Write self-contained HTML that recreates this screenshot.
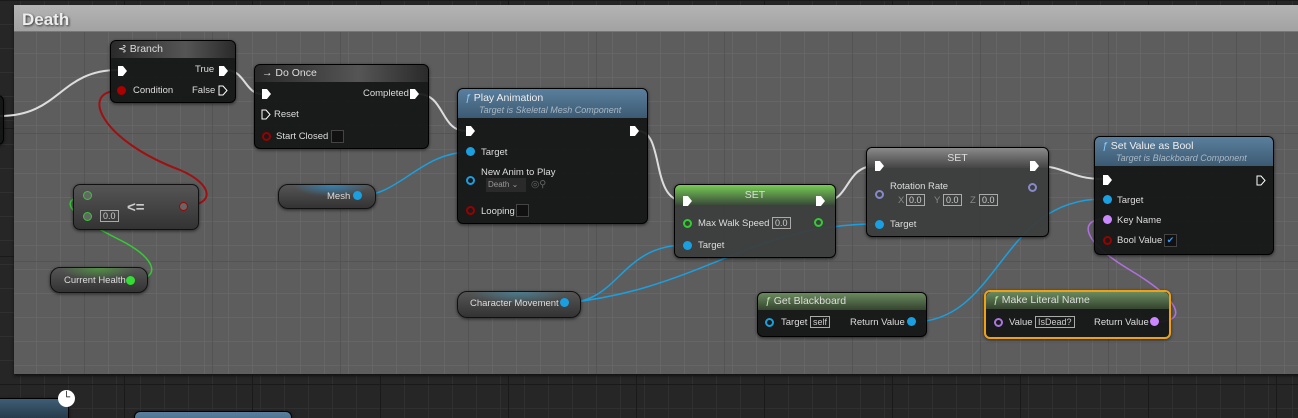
<!DOCTYPE html>
<html><head><meta charset="utf-8"><style>
*{margin:0;padding:0;box-sizing:border-box}
html,body{width:1298px;height:418px;overflow:hidden}
body{position:relative;font-family:"Liberation Sans",sans-serif;font-size:10px;color:#ddd;
background-color:#262626;background-image:linear-gradient(#1a1a1a 1px,transparent 1px),linear-gradient(90deg,#1a1a1a 1px,transparent 1px),linear-gradient(#303030 1px,transparent 1px),linear-gradient(90deg,#303030 1px,transparent 1px);background-size:128px 128px,128px 128px,24px 24px,24px 24px;background-position:-4px 0,-4px 0}
.cm{position:absolute;left:14px;top:5px;width:1300px;height:369px;background-color:#5d5d5d;background-image:linear-gradient(#545454 1px,transparent 1px),linear-gradient(90deg,#545454 1px,transparent 1px),linear-gradient(#666 1px,transparent 1px),linear-gradient(90deg,#666 1px,transparent 1px);background-size:128px 128px,128px 128px,24px 24px,24px 24px;background-position:70px 0,70px 0,-2px 0,-2px 0;box-shadow:0 2px 3px #111}
.cmh{position:absolute;left:0;top:0;right:0;height:27px;background:linear-gradient(180deg,#b4b4b4,#a2a2a2);border-bottom:1px solid #777;font-weight:bold;font-size:17px;color:#eee;padding:5px 8px;text-shadow:1px 1px 2px #333}
.n{position:absolute;background:rgba(20,22,22,.93);border:1px solid #000;border-radius:6px;box-shadow:0 1px 3px rgba(0,0,0,.6)}
.h{height:17px;border-radius:5px 5px 0 0;padding:2px 7px;font-size:10.5px;color:#ddd;background:linear-gradient(90deg,#2a2a2a,#555 60%,#2a2a2a)}
.hb{height:29px;background:linear-gradient(180deg,#5a7f9e,#3c5a72);padding:3px 7px}
.hb i{display:block;font-size:9px;color:#a9b8c4;font-style:italic;padding-left:14px;margin-top:1px}
.t{position:absolute;font-size:9.5px;color:#ddd;white-space:nowrap}
.ex{position:absolute;width:9px;height:10px;background:#fff;clip-path:polygon(0 0,55% 0,100% 50%,55% 100%,0 100%)}
.exo{position:absolute;width:10px;height:11px}
.p{position:absolute;width:9px;height:9px;border-radius:50%}
.box{position:absolute;border:1px solid #aaa;font-size:9px;padding:0 2px;color:#ccc;height:12px;line-height:10px}
.pill{position:absolute;border-radius:10px;border:1px solid #111;background:linear-gradient(180deg,#555,#333);box-shadow:0 1px 3px rgba(0,0,0,.6)}
</style></head><body>
<div class="cm"><div class="cmh">Death</div></div>
<svg width="1298" height="418" style="position:absolute;left:0;top:0" fill="none" stroke-width="2">
<path d="M0 116 C60 116 60 70 118 70" stroke="#ddd"/>
<path d="M226 70 C245 70 245 94 262 94" stroke="#ddd"/>
<path d="M418 94 C445 94 440 131 466 131" stroke="#ddd"/>
<path d="M638 131 C665 131 650 201 684 201" stroke="#ddd"/>
<path d="M825 201 C850 201 845 166 875 166" stroke="#ddd"/>
<path d="M1037 166 C1065 166 1070 179 1103 179" stroke="#ddd"/>
<path d="M118 91 C80 91 100 140 180 170 C215 185 215 206 183 206" stroke="#a01010"/>
<path d="M87 195 C50 200 80 220 120 240 C160 260 160 280 132 280" stroke="#3c3" stroke-width="1.5"/>
<path d="M358 196 C400 196 420 152 470 152" stroke="#1aa0e0" stroke-width="1.5"/>
<path d="M565 303 C620 303 620 245 686 245" stroke="#1aa0e0" stroke-width="1.5"/>
<path d="M565 303 C700 290 750 224 876 224" stroke="#1aa0e0" stroke-width="1.5"/>
<path d="M913 322 C1000 322 1000 199 1103 199" stroke="#1aa0e0" stroke-width="1.5"/>
<path d="M1155 322 C1190 322 1180 300 1130 270 C1080 240 1080 220 1103 219" stroke="#b070e0" stroke-width="1.5"/>
</svg>
<div class="n" style="left:-10px;top:95px;width:14px;height:50px"></div>
<div class="n" style="left:110px;top:40px;width:126px;height:63px"><div class="h">&#x22B0; Branch</div></div>
<div class="ex" style="left:118px;top:66px"></div><div class="t" style="left:195px;top:64px">True</div><div class="ex" style="left:219px;top:66px"></div>
<div class="p" style="left:117px;top:86px;background:#a00"></div><div class="t" style="left:133px;top:85px">Condition</div><div class="t" style="left:192px;top:85px">False</div>
<svg class="exo" style="left:218px;top:85px"><path d="M1 1H5L9 5.5L5 10H1Z" stroke="#fff" fill="none"/></svg>
<div class="n" style="left:254px;top:64px;width:175px;height:85px"><div class="h">&#x2192; Do Once</div></div>
<div class="ex" style="left:262px;top:89px"></div><div class="t" style="left:363px;top:88px">Completed</div><div class="ex" style="left:410px;top:89px"></div>
<svg class="exo" style="left:261px;top:109px"><path d="M1 1H5L9 5.5L5 10H1Z" stroke="#fff" fill="none"/></svg><div class="t" style="left:274px;top:109px">Reset</div>
<div class="p" style="left:262px;top:132px;border:2px solid #900"></div><div class="t" style="left:276px;top:131px">Start Closed</div><div style="position:absolute;left:331px;top:130px;width:13px;height:13px;background:#111;border:1px solid #444"></div>
<div class="n" style="left:457px;top:88px;width:191px;height:136px"><div class="h hb"><b style="font-weight:normal;color:#eee"><span style="color:#8cf;font-style:italic">&fnof;</span> Play Animation</b><i>Target is Skeletal Mesh Component</i></div></div>
<div class="ex" style="left:466px;top:126px"></div><div class="ex" style="left:630px;top:126px"></div>
<div class="p" style="left:466px;top:147px;background:#1aa0e0"></div><div class="t" style="left:481px;top:147px">Target</div>
<div class="t" style="left:481px;top:167px">New Anim to Play</div><div class="p" style="left:466px;top:176px;border:2px solid #1aa0e0"></div>
<div style="position:absolute;left:486px;top:178px;width:40px;height:14px;background:#2a2a2a;font-size:8px;color:#999;padding:2px 2px">Death &#x2304;</div>
<div class="t" style="left:531px;top:179px;color:#666">&#x25CE;&#x26B2;</div>
<div class="p" style="left:466px;top:206px;border:2px solid #900"></div><div class="t" style="left:481px;top:206px">Looping</div><div style="position:absolute;left:516px;top:204px;width:13px;height:13px;background:#111;border:1px solid #444"></div>
<div class="pill" style="left:73px;top:184px;width:126px;height:46px;border-radius:7px"></div>
<div class="p" style="left:83px;top:191px;border:1.5px solid #3c3;background:#666"></div>
<div class="p" style="left:83px;top:212px;border:1.5px solid #3c3;background:#666"></div>
<div class="box" style="left:100px;top:210px">0.0</div>
<div class="t" style="left:127px;top:199px;font-size:15px;font-weight:bold;color:#ccc">&lt;=</div>
<div class="p" style="left:179px;top:202px;border:1.5px solid #a00;background:#666"></div>
<div class="pill" style="left:50px;top:267px;width:98px;height:26px;background:radial-gradient(ellipse 40% 50% at 50% 0,rgba(80,170,60,.7),transparent),linear-gradient(#555,#333)"></div>
<div class="t" style="left:64px;top:275px">Current Health</div><div class="p" style="left:126px;top:276px;background:#3d3"></div>
<div class="pill" style="left:278px;top:184px;width:98px;height:25px;background:radial-gradient(ellipse 40% 50% at 55% 0,rgba(40,150,220,.7),transparent),linear-gradient(#555,#333)"></div>
<div class="t" style="left:327px;top:191px">Mesh</div><div class="p" style="left:353px;top:191px;background:#1aa0e0"></div>
<div class="n" style="left:674px;top:184px;width:162px;height:74px;background:rgba(60,62,62,.95)"><div class="h" style="background:linear-gradient(180deg,#7c5,#3a4a3a);text-align:center;height:20px;padding-top:4px">SET</div></div>
<div class="ex" style="left:683px;top:196px"></div><div class="ex" style="left:816px;top:196px"></div>
<div class="p" style="left:683px;top:219px;border:2px solid #3c3"></div><div class="t" style="left:698px;top:218px">Max Walk Speed</div><div class="box" style="left:772px;top:217px">0.0</div>
<div class="p" style="left:814px;top:218px;border:2px solid #3c3"></div>
<div class="p" style="left:683px;top:241px;background:#1aa0e0"></div><div class="t" style="left:698px;top:240px">Target</div>
<div class="n" style="left:866px;top:147px;width:183px;height:90px;background:rgba(60,62,62,.95)"><div class="h" style="background:linear-gradient(180deg,#8a8a8a,#444);text-align:center;height:20px;padding-top:4px">SET</div></div>
<div class="ex" style="left:875px;top:161px"></div><div class="ex" style="left:1030px;top:161px"></div>
<div class="t" style="left:890px;top:181px">Rotation Rate</div>
<div class="p" style="left:875px;top:190px;border:2px solid #88c"></div><div class="p" style="left:1028px;top:183px;border:2px solid #88c"></div>
<div class="t" style="left:898px;top:195px;color:#888">X</div><div class="box" style="left:906px;top:194px">0.0</div>
<div class="t" style="left:934px;top:195px;color:#888">Y</div><div class="box" style="left:943px;top:194px">0.0</div>
<div class="t" style="left:970px;top:195px;color:#888">Z</div><div class="box" style="left:979px;top:194px">0.0</div>
<div class="p" style="left:875px;top:220px;background:#1aa0e0"></div><div class="t" style="left:890px;top:219px">Target</div>
<div class="n" style="left:1094px;top:136px;width:180px;height:119px"><div class="h hb"><b style="font-weight:normal;color:#eee"><span style="color:#8cf;font-style:italic">&fnof;</span> Set Value as Bool</b><i>Target is Blackboard Component</i></div></div>
<div class="ex" style="left:1103px;top:175px"></div>
<svg class="exo" style="left:1256px;top:175px"><path d="M1 1H5L9 5.5L5 10H1Z" stroke="#fff" fill="none"/></svg>
<div class="p" style="left:1103px;top:195px;background:#1aa0e0"></div><div class="t" style="left:1117px;top:195px">Target</div>
<div class="p" style="left:1103px;top:215px;background:#c8f"></div><div class="t" style="left:1117px;top:215px">Key Name</div>
<div class="p" style="left:1103px;top:236px;border:2px solid #900"></div><div class="t" style="left:1117px;top:235px">Bool Value</div>
<div style="position:absolute;left:1164px;top:234px;width:13px;height:13px;background:#111;border:1px solid #444;color:#39f;font-size:9px;text-align:center;line-height:11px">&#x2714;</div>
<div class="pill" style="left:457px;top:291px;width:124px;height:27px;background:radial-gradient(ellipse 40% 50% at 50% 0,rgba(70,150,180,.6),transparent),linear-gradient(#555,#333)"></div>
<div class="t" style="left:470px;top:298px">Character Movement</div><div class="p" style="left:560px;top:298px;background:#1aa0e0"></div>
<div class="n" style="left:757px;top:292px;width:170px;height:45px"><div class="h" style="background:linear-gradient(180deg,#6a8a5e,#34442f)"><span style="color:#bea;font-style:italic">&fnof;</span> Get Blackboard</div></div>
<div class="p" style="left:765px;top:318px;border:2px solid #1aa0e0"></div><div class="t" style="left:781px;top:317px">Target</div><div class="box" style="left:810px;top:316px">self</div>
<div class="t" style="left:850px;top:317px">Return Value</div><div class="p" style="left:907px;top:317px;background:#1aa0e0"></div>
<div class="n" style="left:984px;top:290px;width:187px;height:49px;border:2px solid #f0a010"><div class="h" style="background:linear-gradient(180deg,#6a8a5e,#34442f)"><span style="color:#bea;font-style:italic">&fnof;</span> Make Literal Name</div></div>
<div class="p" style="left:994px;top:318px;border:2px solid #a7d"></div><div class="t" style="left:1009px;top:317px">Value</div><div class="box" style="left:1035px;top:316px">IsDead?</div>
<div class="t" style="left:1094px;top:317px">Return Value</div><div class="p" style="left:1150px;top:317px;background:#c8f"></div>
<div class="n" style="left:-6px;top:398px;width:75px;height:30px;background:linear-gradient(180deg,#3e5d75,#1c2c38)"></div>
<div style="position:absolute;left:58px;top:390px;width:17px;height:17px;border-radius:50%;background:#fff;color:#000;font-size:10px;line-height:15px;text-align:center">&#x2514;</div>
<div class="n" style="left:134px;top:411px;width:158px;height:20px;background:linear-gradient(180deg,#5a7f9e,#3c5a72)"></div>
</body></html>
